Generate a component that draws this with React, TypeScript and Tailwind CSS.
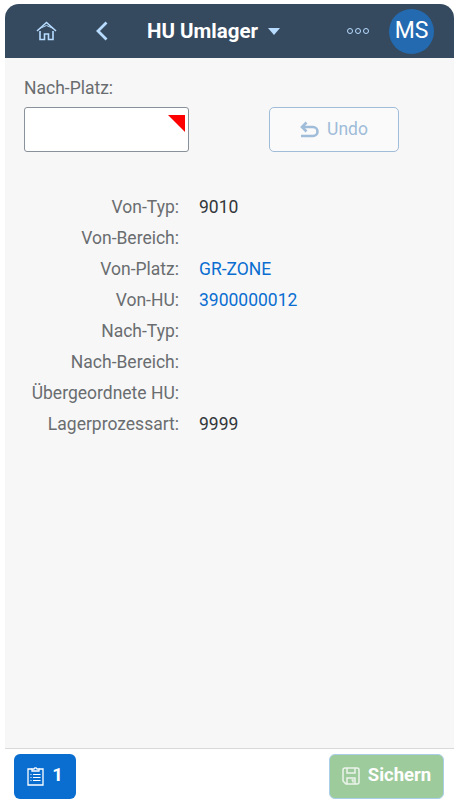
const rows = [
  { label: 'Von-Typ:', value: '9010' },
  { label: 'Von-Bereich:' },
  { label: 'Von-Platz:', value: 'GR-ZONE', link: true },
  { label: 'Von-HU:', value: '3900000012', link: true },
  { label: 'Nach-Typ:' },
  { label: 'Nach-Bereich:' },
  { label: 'Übergeordnete HU:' },
  { label: 'Lagerprozessart:', value: '9999' },
];

function HomeIcon() {
  return (
    <svg width="21" height="20" viewBox="0 0 21 20" fill="none" stroke="#b8dcff" strokeWidth="1.600">
      <path d="M1 10 10.500 1.500 20 10" />
      <path d="M3.500 7.500 10.500 4.500 17.500 7.500" strokeWidth="1" />
      <path d="M4 10v8.500h4.500v-5.500h4v5.500H17V10" />
    </svg>
  );
}

function ClipboardIcon() {
  return (
    <svg width="17" height="20" viewBox="0 0 17 20" fill="none" stroke="#fff" strokeWidth="1.300">
      <path d="M5 3H1v16h15V3h-4" />
      <path d="M5 5V3h2a1.600 1.600 0 0 1 3 0h2v2z" />
      <path d="M3.500 8.500h1M6 8.500h7.500M3.500 11.500h1M6 11.500h7.500M3.500 14.500h1M6 14.500h7.500" strokeWidth="1" />
    </svg>
  );
}

function SaveIcon() {
  return (
    <svg width="18" height="18" viewBox="0 0 18 18" fill="none" stroke="#fff" strokeWidth="1.500" opacity="0.8">
      <path d="M1 3a2 2 0 0 1 2-2h12a2 2 0 0 1 2 2v12a2 2 0 0 1-2 2H4l-3-3z" />
      <path d="M5 1v5h8V1" />
      <path d="M5 17v-6h8v6" />
      <path d="M9.500 13h1.500v2.500" />
    </svg>
  );
}

function UndoIcon() {
  return (
    <svg width="19" height="18" viewBox="0 0 19 18" fill="none" stroke="#9fbcd9" strokeWidth="2.600">
      <path d="M6.500 1.500 2 6l4.500 4.500" />
      <path d="M2 6h11a4.500 4.500 0 0 1 0 9H1" />
    </svg>
  );
}

export default function App() {
  return (
    <div className="flex h-[807px] flex-col bg-white px-[5px] pt-[4px] pb-[4px] font-['Roboto','Noto_Sans',sans-serif]">
      <header className="flex h-[54px] shrink-0 items-center rounded-t-[14px] bg-[#354a5f]">
        <div className="ml-[31px] flex w-[21px] justify-center">
          <HomeIcon />
        </div>
        <svg className="ml-[39px]" width="12" height="20" viewBox="0 0 12 20" fill="none" stroke="#b8dcff" strokeWidth="2.800">
          <path d="M10.500 1.500 2 10l8.500 8.500" />
        </svg>
        <div className="ml-[39px] flex items-center gap-[10px]">
          <span className="text-[20.500px] leading-none font-bold text-white">HU Umlager</span>
          <span className="h-0 w-0 border-x-[6px] border-t-[7px] border-x-transparent border-t-[#b8dcff]" />
        </div>
        <div className="ml-auto flex gap-[2px]">
          <span className="size-[6px] rounded-full border border-[#b8dcff]" />
          <span className="size-[6px] rounded-full border border-[#b8dcff]" />
          <span className="size-[6px] rounded-full border border-[#b8dcff]" />
        </div>
        <div className="mr-[20px] ml-[20px] flex size-[45px] items-center justify-center rounded-full bg-[#236ab1] pt-[1px] text-[23px] text-white">
          MS
        </div>
      </header>

      <main className="flex-1 bg-[#f7f7f7] pt-[19px] pl-[19px]">
        <div className="text-[17.500px] leading-[22px] text-[#6a6d70]">Nach-Platz:</div>
        <div className="mt-[8px] flex items-center">
          <div className="relative h-[45px] w-[165px] rounded-[3px] border border-[#89919a] bg-white">
            <span className="absolute top-[7px] right-[3px] h-0 w-0 border-t-[17px] border-l-[17px] border-t-[#ff0000] border-l-transparent" />
          </div>
          <button className="ml-[80px] flex h-[45px] w-[130px] items-center justify-center gap-[8px] rounded-[5px] border border-[#9fbcd9] bg-[#fafafa] text-[17.500px] text-[#9fbcd9]">
            <UndoIcon />
            Undo
          </button>
        </div>

        <div className="mt-[40px] flex flex-col">
          {rows.map(row => (
            <div key={row.label} className="flex h-[31px] items-center text-[17.500px]">
              <span className="w-[155px] text-right text-[#6a6d70]">{row.label}</span>
              {row.value && (
                <span className={row.link ? 'ml-[20px] text-[#0a6ed1]' : 'ml-[20px] text-[#32363a]'}>
                  {row.value}
                </span>
              )}
            </div>
          ))}
        </div>
      </main>

      <footer className="flex h-[55px] shrink-0 items-center justify-between border-t border-[#d9d9d9] bg-white pr-[10px] pl-[9px]">
        <button className="flex h-[45px] w-[62px] items-center justify-center gap-[8px] rounded-[6px] bg-[#0a6ed1] text-[18.500px] font-bold text-white">
          <ClipboardIcon />
          1
        </button>
        <button className="flex h-[45px] w-[115px] items-center justify-center gap-[8px] rounded-[6px] border border-[#a9cfe8] bg-[#9dcb9b] text-[18.500px] font-bold text-white">
          <SaveIcon />
          Sichern
        </button>
      </footer>
    </div>
  );
}
